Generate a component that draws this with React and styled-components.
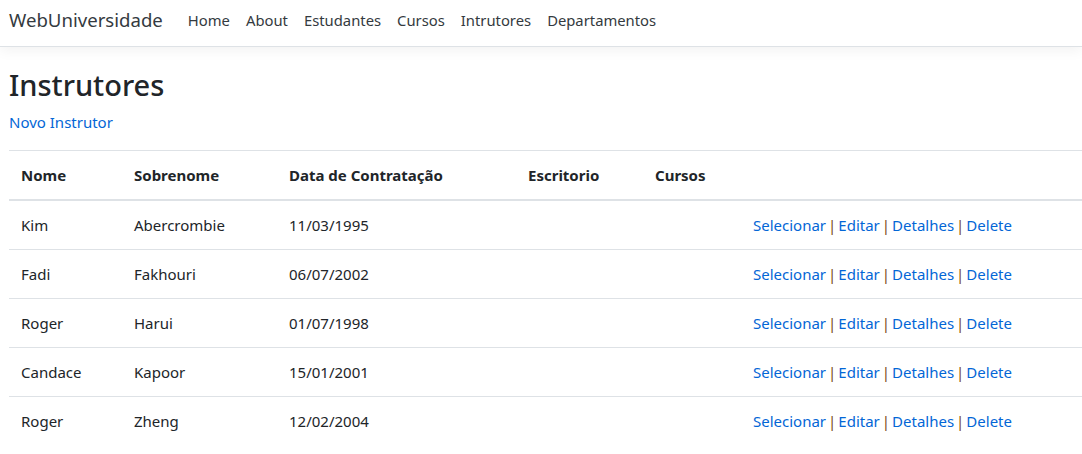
import styled, { createGlobalStyle } from 'styled-components'

const GlobalStyle = createGlobalStyle`
  body {
    margin: 0;
    background: #fff;
    font-family: 'Noto Sans', 'Open Sans', sans-serif;
    color: #212529;
    font-size: 15px;
  }
`

const Navbar = styled.nav`
  display: flex;
  align-items: center;
  box-sizing: border-box;
  height: 47px;
  padding: 0 9px 7px;
  background: #fff;
  border-bottom: 1px solid #dee2e6;
  box-shadow: 0 4px 12px rgba(0, 0, 0, 0.05);
`

const Brand = styled.a`
  font-size: 18.6px;
  color: #343a40;
  margin-right: 17px;
  text-decoration: none;
`

const NavLinks = styled.div`
  display: flex;
`

const NavLink = styled.a`
  padding: 0 8px;
  font-size: 14.8px;
  color: #343a40;
  text-decoration: none;
`

const Main = styled.main`
  padding: 21px 0 0 9px;
`

const Title = styled.h1`
  margin: 0 0 9px;
  font-size: 29px;
  font-weight: 500;
  line-height: 1.2;
`

const Link = styled.a`
  color: #0366d6;
  text-decoration: none;
`

const NewLink = styled(Link)`
  display: inline-block;
  margin-bottom: 18px;
  font-size: 15px;
`

const Table = styled.table`
  width: 100%;
  border-collapse: collapse;
  font-size: 15px;
`

const Th = styled.th`
  width: ${(p) => p.$w || 'auto'};
  text-align: left;
  font-weight: 700;
  padding: 12px;
  height: 24px;
  border-top: 1px solid #dee2e6;
  border-bottom: 2px solid #dee2e6;
`

const Td = styled.td`
  padding: 12px;
  height: 24px;
  border-top: 1px solid #dee2e6;
  white-space: nowrap;
`

const Sep = styled.span`
  color: #7b4a1c;
  margin: 0 2px;
`

const instructors = [
  ['Kim', 'Abercrombie', '11/03/1995'],
  ['Fadi', 'Fakhouri', '06/07/2002'],
  ['Roger', 'Harui', '01/07/1998'],
  ['Candace', 'Kapoor', '15/01/2001'],
  ['Roger', 'Zheng', '12/02/2004'],
]

const actions = ['Selecionar', 'Editar', 'Detalhes', 'Delete']

export default function App() {
  return (
    <>
      <GlobalStyle />
      <Navbar>
        <Brand href="#">WebUniversidade</Brand>
        <NavLinks>
          {['Home', 'About', 'Estudantes', 'Cursos', 'Intrutores', 'Departamentos'].map((n) => (
            <NavLink href="#" key={n}>{n}</NavLink>
          ))}
        </NavLinks>
      </Navbar>
      <Main>
        <Title>Instrutores</Title>
        <NewLink href="#">Novo Instrutor</NewLink>
        <Table>
          <thead>
            <tr>
              <Th $w="89px">Nome</Th>
              <Th $w="131px">Sobrenome</Th>
              <Th $w="215px">Data de Contratação</Th>
              <Th $w="103px">Escritorio</Th>
              <Th $w="74px">Cursos</Th>
              <Th />
            </tr>
          </thead>
          <tbody>
            {instructors.map(([first, last, date], i) => (
              <tr key={i}>
                <Td>{first}</Td>
                <Td>{last}</Td>
                <Td>{date}</Td>
                <Td />
                <Td />
                <Td>
                  {actions.map((a, j) => (
                    <span key={a}>
                      {j > 0 && <Sep>|</Sep>}
                      <Link href="#">{a}</Link>
                    </span>
                  ))}
                </Td>
              </tr>
            ))}
          </tbody>
        </Table>
      </Main>
    </>
  )
}
